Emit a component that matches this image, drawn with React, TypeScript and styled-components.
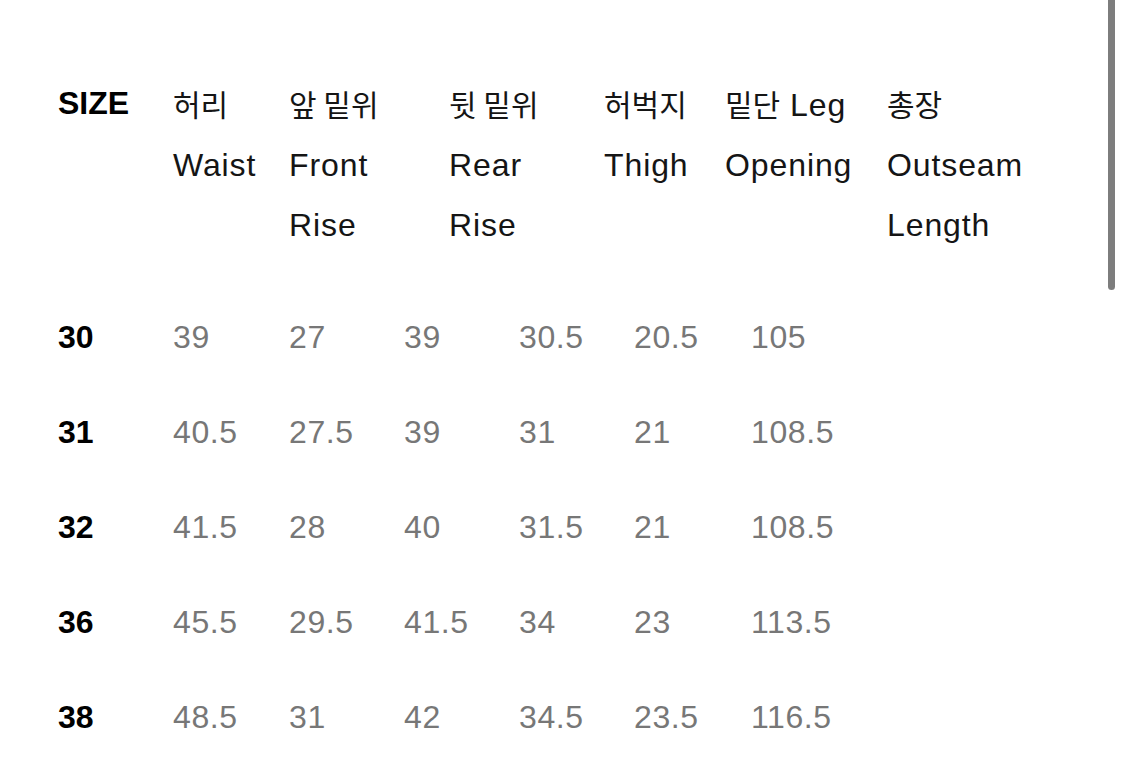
import styled, { createGlobalStyle } from "styled-components";

const GlobalStyle = createGlobalStyle`
  html, body {
    margin: 0;
    padding: 0;
    background: #fff;
    overflow: hidden;
  }
  body {
    font-family: "Liberation Sans", "Noto Sans CJK KR", sans-serif;
  }
`;

const Page = styled.div`
  position: relative;
  width: 1125px;
  height: 759px;
  box-sizing: border-box;
  padding: 73px 0 0 58px;
`;

const Scrollbar = styled.div`
  position: absolute;
  top: -6px;
  right: 10px;
  width: 7px;
  height: 296px;
  border-radius: 4px;
  background: #7d7d7d;
`;

const HeaderRow = styled.div`
  display: flex;
  font-size: 32px;
  line-height: 60px;
  color: #151515;
  letter-spacing: 0.9px;
`;

const HeaderCell = styled.div<{ $w?: number; $bold?: boolean }>`
  flex: ${(p) => (p.$w ? `0 0 ${p.$w}px` : "1 1 auto")};
  font-weight: ${(p) => (p.$bold ? 700 : 400)};
  letter-spacing: ${(p) => (p.$bold ? "0" : "inherit")};
  color: ${(p) => (p.$bold ? "#000" : "inherit")};
  white-space: nowrap;
`;

const Ko = styled.span`
  font-family: "Noto Sans CJK KR", sans-serif;
  font-size: 30px;
  letter-spacing: 0;
`;

const Body = styled.div`
  margin-top: 35px;
`;

const Row = styled.div`
  display: grid;
  grid-template-columns: 115px 116px 115px 115px 115px 117px auto;
  height: 95px;
  line-height: 95px;
  font-size: 32px;
`;

const SizeCell = styled.div`
  font-weight: 700;
  color: #000;
`;

const Value = styled.div`
  color: #777;
  letter-spacing: 0.6px;
`;

const headers: { ko: string; en: string[]; w?: number }[] = [
  { ko: "허리", en: ["Waist"], w: 116 },
  { ko: "앞 밑위", en: ["Front", "Rise"], w: 160 },
  { ko: "뒷 밑위", en: ["Rear", "Rise"], w: 155 },
  { ko: "허벅지", en: ["Thigh"], w: 121 },
  { ko: "밑단", en: ["Opening"], w: 162 },
  { ko: "총장", en: ["Outseam", "Length"] },
];

const rows: [string, string[]][] = [
  ["30", ["39", "27", "39", "30.5", "20.5", "105"]],
  ["31", ["40.5", "27.5", "39", "31", "21", "108.5"]],
  ["32", ["41.5", "28", "40", "31.5", "21", "108.5"]],
  ["36", ["45.5", "29.5", "41.5", "34", "23", "113.5"]],
  ["38", ["48.5", "31", "42", "34.5", "23.5", "116.5"]],
];

export default function App() {
  return (
    <Page>
      <GlobalStyle />
      <Scrollbar />
      <HeaderRow>
        <HeaderCell $w={115} $bold>
          SIZE
        </HeaderCell>
        {headers.map((h, i) => (
          <HeaderCell key={h.ko} $w={h.w}>
            <div>
              <Ko>{h.ko}</Ko>
              {i === 4 && " Leg"}
            </div>
            {h.en.map((line) => (
              <div key={line}>{line}</div>
            ))}
          </HeaderCell>
        ))}
      </HeaderRow>
      <Body>
        {rows.map(([size, values]) => (
          <Row key={size}>
            <SizeCell>{size}</SizeCell>
            {values.map((v, i) => (
              <Value key={i}>{v}</Value>
            ))}
          </Row>
        ))}
      </Body>
    </Page>
  );
}
